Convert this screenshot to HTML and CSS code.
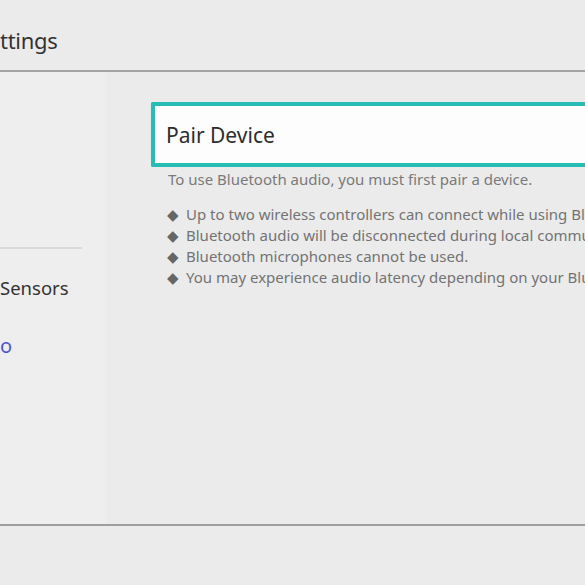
FILE: index.html
```
<!DOCTYPE html>
<html>
<head>
<meta charset="utf-8">
<link rel="stylesheet" href="styles.css">
</head>
<body>
<div class="screen">
  <header class="header"><h1 class="title">ttings</h1></header>
  <div class="main">
    <nav class="sidebar">
      <div class="side-top"></div>
      <div class="side-divider"></div>
      <div class="side-item">Sensors</div>
      <div class="side-link">o</div>
    </nav>
    <section class="content">
      <div class="pair-box"><span class="pair-label">Pair Device</span></div>
      <p class="desc">To use Bluetooth audio, you must first pair a device.</p>
      <ul class="notes">
        <li class="note"><span class="dia">◆</span><span class="note-text">Up to two wireless controllers can connect while using Bluetooth audio.</span></li>
        <li class="note"><span class="dia">◆</span><span class="note-text">Bluetooth audio will be disconnected during local communication.</span></li>
        <li class="note"><span class="dia">◆</span><span class="note-text">Bluetooth microphones cannot be used.</span></li>
        <li class="note"><span class="dia">◆</span><span class="note-text">You may experience audio latency depending on your Bluetooth device.</span></li>
      </ul>
    </section>
  </div>
  <footer class="footer"></footer>
</div>
</body>
</html>
```
FILE: styles.css
```
html, body {
  margin: 0;
  padding: 0;
  background: #ebebeb;
}
.screen {
  width: 585px;
  height: 585px;
  overflow: hidden;
  display: flex;
  flex-direction: column;
  font-family: "Noto Sans", "Open Sans", sans-serif;
  color: #2d2d2d;
}
.header {
  height: 70px;
  border-bottom: 2px solid #a3a3a3;
  display: flex;
  align-items: center;
  flex-shrink: 0;
}
.title {
  margin: 0;
  margin-top: 10px;
  font-size: 22px;
  letter-spacing: -0.3px;
  font-weight: 400;
  color: #333;
  line-height: 1;
}
.main {
  display: flex;
  height: 452px;
  flex-shrink: 0;
}
.sidebar {
  width: 106px;
  background: #eeeeee;
  display: flex;
  flex-direction: column;
  flex-shrink: 0;
}
.side-top {
  height: 175px;
}
.side-divider {
  width: 82px;
  height: 2px;
  background: #dadada;
}
.side-item {
  margin-top: 27px;
  font-size: 18.5px;
  line-height: 24px;
  color: #333;
}
.side-link {
  margin-top: 34px;
  font-size: 20px;
  line-height: 24px;
  color: #4b56d2;
}
.content {
  flex: 1;
  min-width: 0;
  padding-left: 45px;
  padding-top: 30px;
  white-space: nowrap;
  overflow: hidden;
}
.pair-box {
  height: 57px;
  background: #fdfdfd;
  border: 4px solid #26bdb5;
  border-right: none;
  display: flex;
  align-items: center;
  padding-left: 11px;
  border-radius: 2px 0 0 2px;
}
.pair-label {
  font-size: 21px;
  color: #2d2d2d;
}
.desc {
  margin: 2px 0 0 17px;
  font-size: 15px;
  line-height: 20px;
  color: #7a7a7a;
}
.notes {
  list-style: none;
  margin: 15px 0 0 16px;
  padding: 0;
  font-size: 15px;
  color: #737373;
}
.note {
  display: flex;
  align-items: center;
  height: 21px;
  line-height: 21px;
}
.dia {
  width: 19px;
  flex-shrink: 0;
  font-size: 15px;
  line-height: 21px;
  color: #666;
}
.note-text {
  white-space: nowrap;
}
.footer {
  height: 61px;
  border-top: 2px solid #9e9e9e;
  flex-shrink: 0;
}
```
